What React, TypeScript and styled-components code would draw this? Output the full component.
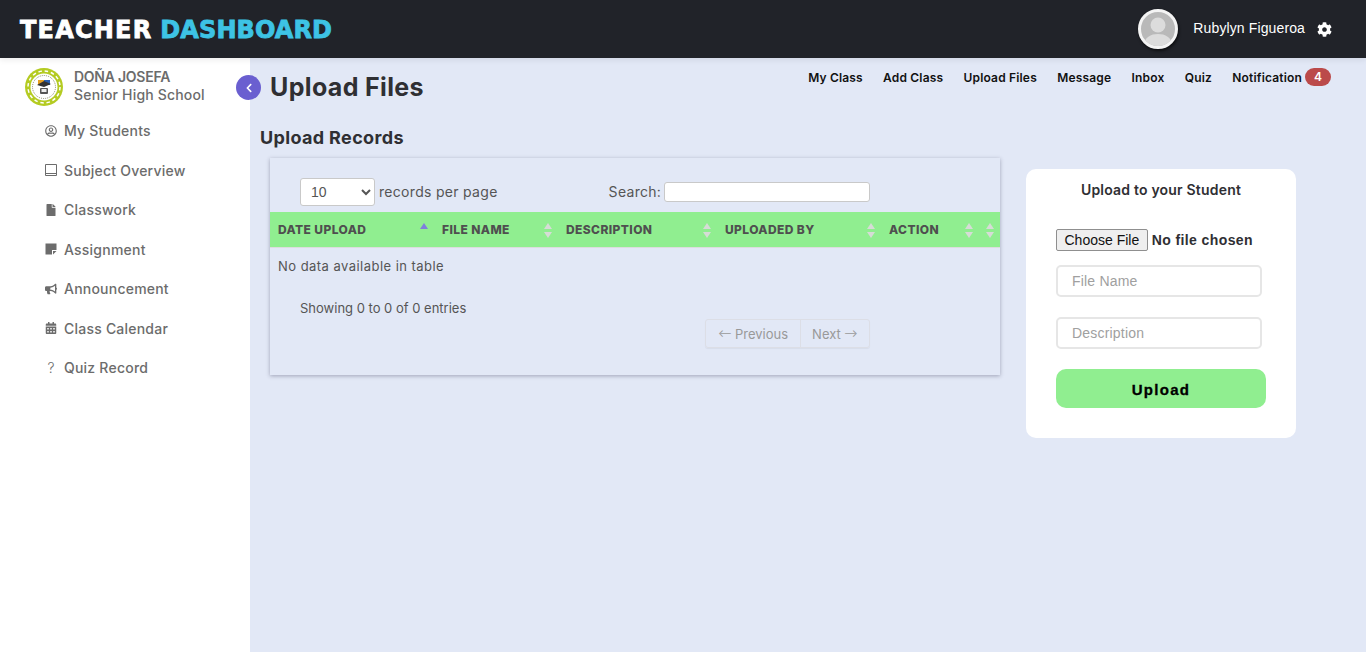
import React from "react";
import styled, { createGlobalStyle } from "styled-components";
import { FaCog, FaRegUserCircle, FaFile, FaBullhorn, FaCalendarAlt, FaChevronLeft } from "react-icons/fa";

const GlobalStyle = createGlobalStyle`
  html, body {
    margin: 0;
    padding: 0;
    height: 100%;
    overflow: hidden;
    background: #e2e8f6;
    font-family: "Inter", "Liberation Sans", sans-serif;
  }
  * { box-sizing: border-box; }
`;

const Page = styled.div`
  width: 1366px;
  height: 652px;
  display: flex;
  flex-direction: column;
`;

const Header = styled.header`
  height: 58px;
  flex: none;
  background: #212329;
  display: flex;
  align-items: center;
  justify-content: space-between;
  padding: 0 34px 0 20px;
  box-shadow: 0 2px 6px rgba(0, 0, 0, 0.08);
  position: relative;
  z-index: 2;
`;

const Brand = styled.div`
  display: flex;
  gap: 8px;
  padding-top: 2px;
  font-family: "DejaVu Sans", sans-serif;
  font-weight: 700;
  font-size: 24px;
  -webkit-text-stroke: 0.8px currentColor;
`;

const BrandWord = styled.span<{ $accent?: boolean }>`
  color: ${(p) => (p.$accent ? "#3dc3e5" : "#fff")};
  letter-spacing: ${(p) => (p.$accent ? "0.1px" : "1.2px")};
`;

const UserBox = styled.div`
  display: flex;
  align-items: center;
  color: #fff;
`;

const Avatar = styled.div`
  width: 40px;
  height: 40px;
  border-radius: 50%;
  border: 3px solid #f4f4f4;
  background: #b9b9b9;
  overflow: hidden;
  box-shadow: 1px 2px 3px rgba(0, 0, 0, 0.6);
  margin-right: 15px;
  svg { display: block; width: 100%; height: 100%; }
`;

const UserName = styled.span`
  font-family: "Liberation Sans", sans-serif;
  font-size: 14px;
  font-weight: 400;
  letter-spacing: 0.12px;
  margin-right: 12px;
  padding-bottom: 2px;
`;

const Body = styled.div`
  flex: 1;
  display: flex;
  min-height: 0;
`;

const Sidebar = styled.aside`
  width: 250px;
  flex: none;
  background: #fff;
  position: relative;
`;

const School = styled.div`
  display: flex;
  align-items: center;
  gap: 11px;
  padding: 10px 0 0 25px;
`;

const SchoolText = styled.div`
  font-size: 14px;
  line-height: 18px;
  color: #6c6c6c;
  font-weight: 500;
  letter-spacing: 0.18px;
  padding-bottom: 2px;
  b { display: block; font-weight: 600; letter-spacing: -0.25px; }
`;

const Menu = styled.nav`
  display: flex;
  flex-direction: column;
  padding: 5px 0 0 45px;
`;

const MenuItem = styled.a`
  height: 39.5px;
  display: flex;
  align-items: center;
  gap: 7px;
  font-size: 14px;
  font-weight: 500;
  letter-spacing: 0.22px;
  color: #6c6c6c;
`;

const MenuIcon = styled.span`
  width: 12px;
  height: 12px;
  display: flex;
  align-items: center;
  justify-content: center;
  font-size: 12px;
  color: #6c6c6c;
  svg { display: block; }
`;

const QuizMark = styled.span`
  font-size: 14px;
  font-weight: 300;
`;

const Toggle = styled.button`
  position: absolute;
  top: 17px;
  right: -11px;
  width: 25px;
  height: 25px;
  border: none;
  border-radius: 50%;
  padding: 0;
  background: #6a5fd0;
  color: #fff;
  display: flex;
  align-items: center;
  justify-content: center;
  font-size: 10px;
  z-index: 1;
`;

const Main = styled.main`
  flex: 1;
  min-width: 0;
  padding: 0 35px 0 10px;
`;

const TopRow = styled.div`
  height: 58px;
  display: flex;
  align-items: center;
  justify-content: space-between;
  padding-left: 10px;
`;

const Title = styled.h1`
  margin: 0;
  font-size: 25px;
  font-weight: 700;
  letter-spacing: 0.35px;
  color: #2f2f33;
`;

const TopNav = styled.nav`
  display: flex;
  align-items: center;
  gap: 20.3px;
  margin-bottom: 20px;
`;

const TopLink = styled.a`
  display: inline-flex;
  align-items: center;
  font-size: 12px;
  font-weight: 600;
  letter-spacing: 0.17px;
  color: #111;
  white-space: nowrap;
`;

const Badge = styled.span`
  display: inline-block;
  min-width: 26px;
  height: 18px;
  line-height: 18px;
  margin-left: 3px;
  border-radius: 9px;
  background: #bb4a4a;
  color: #fff;
  font-size: 12px;
  font-weight: 600;
  text-align: center;
`;

const SectionTitle = styled.h2`
  margin: 11px 0 0;
  height: 31px;
  line-height: 22px;
  font-size: 18px;
  font-weight: 700;
  letter-spacing: 0.35px;
  color: #2f2f33;
`;

const Content = styled.div`
  display: flex;
  align-items: flex-start;
  padding-left: 10px;
  gap: 26px;
`;

const TableCard = styled.section`
  width: 730px;
  height: 217px;
  flex: none;
  background: #e2e8f6;
  box-shadow: 0 1px 4px rgba(60, 60, 90, 0.4);
`;

const Controls = styled.div`
  height: 54px;
  display: flex;
  align-items: center;
  padding: 14px 0 0 30px;
  font-size: 14px;
  color: #555;
`;

const PageSize = styled.select`
  width: 75px;
  height: 28px;
  padding: 0 6px;
  margin-right: 4px;
  border: 1px solid #c9c9c9;
  border-radius: 3px;
  background: #fff;
  color: #555;
  font-family: "Liberation Sans", sans-serif;
  font-size: 14px;
`;

const ControlText = styled.span`
  padding-bottom: 2px;
  letter-spacing: 0.3px;
`;

const SearchLabel = styled(ControlText)`
  margin-left: 111px;
  margin-right: 3px;
`;

const SearchInput = styled.input`
  width: 206px;
  height: 20px;
  border: 1px solid #c9c9c9;
  border-radius: 3px;
  background: #fff;
`;

const Grid = styled.div`
  height: 36px;
  display: grid;
  grid-template-columns: 164px 124px 159px 164px 98px 21px;
  background: #90ee90;
  border-bottom: 1px solid #dcdcdc;
`;

const HeadCell = styled.div`
  position: relative;
  display: flex;
  align-items: center;
  padding-left: 8px;
  font-size: 12px;
  font-weight: 800;
  letter-spacing: 0.4px;
  color: #4f4f4f;
  white-space: nowrap;
`;

const Sort = styled.span<{ $active?: boolean }>`
  position: absolute;
  right: 5px;
  top: 11px;
  width: 9px;
  height: 15px;
  &::before, &::after {
    content: "";
    position: absolute;
    left: 0;
    border-left: 4.5px solid transparent;
    border-right: 4.5px solid transparent;
  }
  &::before {
    top: 0;
    border-bottom: 6.5px solid ${(p) => (p.$active ? "#7f7fdc" : "#d6dcd6")};
  }
  &::after {
    bottom: 0;
    border-top: 6.5px solid ${(p) => (p.$active ? "transparent" : "#d6dcd6")};
  }
`;

const EmptyRow = styled.div`
  height: 36px;
  display: flex;
  align-items: center;
  padding-left: 8px;
  font-size: 13px;
  letter-spacing: 0.46px;
  color: #555;
`;

const Info = styled.div`
  padding: 15px 0 0 30px;
  height: 35px;
  line-height: 18px;
  font-size: 13px;
  color: #555;
`;

const PagerRow = styled.div`
  display: flex;
  justify-content: flex-end;
  padding: 0 130px 0 0;
`;

const Pager = styled.div`
  display: flex;
  height: 29px;
  border: 1px solid #dcdee6;
  border-radius: 3px;
  box-shadow: 0 1px 1px rgba(0, 0, 0, 0.05);
`;

const PagerBtn = styled.span<{ $wide?: boolean }>`
  display: flex;
  align-items: center;
  gap: 3px;
  width: ${(p) => (p.$wide ? "94px" : "69px")};
  justify-content: center;
  font-size: 13px;
  color: #999;
  & + & { border-left: 1px solid #dcdee6; }
`;

const PagerArrow = styled.span`
  font-size: 10.5px;
`;

const UploadCard = styled.section`
  width: 270px;
  height: 269px;
  margin-top: 11px;
  flex: none;
  background: #fff;
  border-radius: 10px;
  padding: 12px 30px 0;
`;

const UploadTitle = styled.h3`
  margin: 0 0 30px;
  height: 18px;
  line-height: 18px;
  text-align: center;
  font-size: 14px;
  font-weight: 600;
  letter-spacing: 0.2px;
  color: #2f2f33;
`;

const FileInput = styled.input`
  display: block;
  width: 210px;
  height: 22px;
  margin-bottom: 14px;
  font-family: "Liberation Sans", sans-serif;
  font-size: 14px;
  font-weight: 700;
  letter-spacing: 0.4px;
  color: #2f2f33;
  &::file-selector-button {
    font-family: "Liberation Sans", sans-serif;
    font-size: 14px;
    font-weight: 400;
    letter-spacing: 0;
    height: 22px;
    padding: 0 7.5px;
    margin-right: 4px;
    border: 1px solid #8f8f8f;
    border-radius: 2px;
    background: #efefef;
    color: #111;
  }
`;

const TextInput = styled.input`
  display: block;
  width: 206px;
  height: 32px;
  margin-bottom: 20px;
  padding: 0 14px;
  border: 2px solid #e6e6e6;
  border-radius: 5px;
  font-family: "Liberation Sans", sans-serif;
  font-size: 14px;
  letter-spacing: 0.2px;
  &::placeholder { color: #a0a0a0; opacity: 1; }
`;

const UploadBtn = styled.button`
  display: block;
  width: 210px;
  height: 39px;
  padding: 2px 0 0;
  border: none;
  border-radius: 10px;
  background: #90ee90;
  font-family: "Liberation Sans", sans-serif;
  font-size: 15px;
  font-weight: 700;
  letter-spacing: 1.3px;
  -webkit-text-stroke: 0.3px #000;
  color: #000;
`;

const menu = [
  { label: "My Students", icon: <FaRegUserCircle /> },
  {
    label: "Subject Overview",
    icon: (
      <svg width="12" height="12" viewBox="0 0 12 12" fill="none" stroke="#6c6c6c" strokeWidth="1">
        <path d="M.5.5h11v11H.5zM.5 9.5h11" />
      </svg>
    ),
  },
  { label: "Classwork", icon: <FaFile /> },
  {
    label: "Assignment",
    icon: (
      <svg width="12" height="12" viewBox="0 0 12 12">
        <path d="M.5.5h11v6.5h-4.500v4.500H.5z" fill="#6c6c6c" />
        <path d="M8 8h3.500L8 11.500z" fill="#6c6c6c" />
      </svg>
    ),
  },
  { label: "Announcement", icon: <FaBullhorn /> },
  { label: "Class Calendar", icon: <FaCalendarAlt /> },
  { label: "Quiz Record", icon: <QuizMark>?</QuizMark> },
];

const links = ["My Class", "Add Class", "Upload Files", "Message", "Inbox", "Quiz"];
const columns = ["DATE UPLOAD", "FILE NAME", "DESCRIPTION", "UPLOADED BY", "ACTION", ""];

const SchoolLogo = () => (
  <svg width="38" height="38" viewBox="0 0 38 38">
    <circle cx="19" cy="19" r="19" fill="#b4cb22" />
    <circle cx="19" cy="19" r="16" fill="none" stroke="#fff" strokeWidth="1.5" strokeDasharray="3.500 2.800" />
    <circle cx="19" cy="19" r="13.500" fill="#fff" />
    <circle cx="19" cy="19" r="11.500" fill="none" stroke="#8a8a6a" strokeWidth="1" strokeDasharray="1 1" />
    <rect x="13" y="12" width="6" height="5" fill="#e8a020" />
    <rect x="19" y="12" width="6" height="5" fill="#2a5fb0" />
    <path d="M12 17l7-4 7 3-7 3z" fill="#333" />
    <rect x="15" y="20" width="8" height="6" rx="1" fill="#555" />
    <rect x="16.500" y="21" width="5" height="3" fill="#eee" />
  </svg>
);

const App = () => (
  <Page>
    <GlobalStyle />
    <Header>
      <Brand>
        <BrandWord>TEACHER</BrandWord>
        <BrandWord $accent>DASHBOARD</BrandWord>
      </Brand>
      <UserBox>
        <Avatar>
          <svg viewBox="0 0 34 34">
            <circle cx="17" cy="13" r="7.5" fill="#dcdcdc" />
            <path d="M3 34c0-9 7-12 14-12s14 3 14 12z" fill="#dcdcdc" />
          </svg>
        </Avatar>
        <UserName>Rubylyn Figueroa</UserName>
        <FaCog size={15} />
      </UserBox>
    </Header>
    <Body>
      <Sidebar>
        <School>
          <SchoolLogo />
          <SchoolText>
            <b>DOÑA JOSEFA</b>
            Senior High School
          </SchoolText>
        </School>
        <Toggle aria-label="Collapse">
          <FaChevronLeft />
        </Toggle>
        <Menu>
          {menu.map((item) => (
            <MenuItem key={item.label}>
              <MenuIcon>{item.icon}</MenuIcon>
              {item.label}
            </MenuItem>
          ))}
        </Menu>
      </Sidebar>
      <Main>
        <TopRow>
          <Title>Upload Files</Title>
          <TopNav>
            {links.map((l) => (
              <TopLink key={l}>{l}</TopLink>
            ))}
            <TopLink>
              Notification<Badge>4</Badge>
            </TopLink>
          </TopNav>
        </TopRow>
        <SectionTitle>Upload Records</SectionTitle>
        <Content>
          <TableCard>
            <Controls>
              <PageSize defaultValue="10">
                <option>10</option>
                <option>25</option>
                <option>50</option>
              </PageSize>
              <ControlText>records per page</ControlText>
              <SearchLabel>Search:</SearchLabel>
              <SearchInput />
            </Controls>
            <Grid>
              {columns.map((c, i) => (
                <HeadCell key={i}>
                  {c}
                  <Sort $active={i === 0} />
                </HeadCell>
              ))}
            </Grid>
            <EmptyRow>No data available in table</EmptyRow>
            <Info>Showing 0 to 0 of 0 entries</Info>
            <PagerRow>
              <Pager>
                <PagerBtn $wide>
                  <PagerArrow>⟵</PagerArrow>Previous
                </PagerBtn>
                <PagerBtn>
                  Next<PagerArrow>⟶</PagerArrow>
                </PagerBtn>
              </Pager>
            </PagerRow>
          </TableCard>
          <UploadCard>
            <UploadTitle>Upload to your Student</UploadTitle>
            <FileInput type="file" />
            <TextInput placeholder="File Name" />
            <TextInput placeholder="Description" />
            <UploadBtn>Upload</UploadBtn>
          </UploadCard>
        </Content>
      </Main>
    </Body>
  </Page>
);

export default App;
